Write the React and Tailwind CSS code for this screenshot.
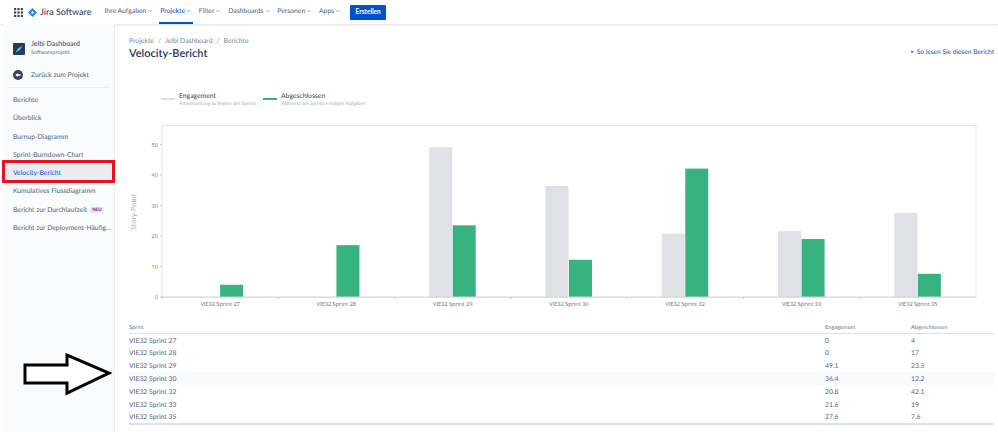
import { ChevronDown } from 'lucide-react'

const navItems = ['Ihre Aufgaben', 'Projekte', 'Filter', 'Dashboards', 'Personen', 'Apps']

const reports = [
  'Überblick',
  'Burnup-Diagramm',
  'Sprint-Burndown-Chart',
  'Velocity-Bericht',
  'Kumulatives Flussdiagramm',
  'Bericht zur Durchlaufzeit',
  'Bericht zur Deployment-Häufig...',
]

const sprints = [
  { name: 'VIE32 Sprint 27', engagement: 0, done: 4 },
  { name: 'VIE32 Sprint 28', engagement: 0, done: 17 },
  { name: 'VIE32 Sprint 29', engagement: 49.1, done: 23.5 },
  { name: 'VIE32 Sprint 30', engagement: 36.4, done: 12.2 },
  { name: 'VIE32 Sprint 32', engagement: 20.8, done: 42.1 },
  { name: 'VIE32 Sprint 33', engagement: 21.6, done: 19 },
  { name: 'VIE32 Sprint 35', engagement: 27.6, done: 7.6 },
]

const AppGrid = () => (
  <svg width="9" height="9" viewBox="0 0 9 9" fill="#344563">
    {[0, 3.4, 6.8].map((y) =>
      [0, 3.4, 6.8].map((x) => <rect key={`${x}-${y}`} x={x} y={y} width="2.2" height="2.2" />)
    )}
  </svg>
)

const JiraLogo = () => (
  <svg width="9" height="9" viewBox="0 0 10 10">
    <path d="M5 0 L10 5 L5 10 L0 5 Z" fill="#2684ff" />
    <path d="M5 3.4 L6.6 5 L5 6.6 L3.4 5 Z" fill="#fff" />
  </svg>
)

const ProjectIcon = () => (
  <svg width="12" height="12" viewBox="0 0 12 12" className="rounded-[1px]">
    <rect width="12" height="12" fill="#243b5a" />
    <path d="M3 9 L5 5.5 L9.5 2.5 L7 7 Z" fill="#4fc3d9" />
    <path d="M2.5 9.5 L4 8 L4.6 8.6 Z" fill="#f5cd47" />
  </svg>
)

const BackIcon = () => (
  <svg width="10" height="10" viewBox="0 0 10 10">
    <circle cx="5" cy="5" r="5" fill="#344563" />
    <path d="M2.4 5 L4.8 3 V4.2 H7.6 V5.8 H4.8 V7 Z" fill="#fff" />
  </svg>
)

const VelocityChart = () => {
  const left = 33
  const right = 847
  const bottom = 172
  const unit = 3.05
  const step = (right - left) / 7
  return (
    <svg width="860" height="188" viewBox="0 0 860 188" className="block">
      <rect x={left} y="0.5" width={right - left} height={bottom} fill="#fff" stroke="#e6e6e6" />
      <text
        transform="rotate(-90 7 87)"
        x="7"
        y="87"
        textAnchor="middle"
        fontSize="7"
        fill="#a3a3a3"
        fontFamily="Open Sans, sans-serif"
      >
        Story-Point
      </text>
      {[0, 10, 20, 30, 40, 50].map((v) => (
        <g key={v}>
          <line x1={left - 2} x2={left} y1={bottom - v * unit} y2={bottom - v * unit} stroke="#ccc" />
          <text
            x={left - 4}
            y={bottom - v * unit + 2}
            textAnchor="end"
            fontSize="5.6"
            fill="#777"
            fontFamily="Open Sans, sans-serif"
          >
            {v}
          </text>
        </g>
      ))}
      {sprints.map((s, i) => {
        const mid = left + step * i + step / 2
        return (
          <g key={s.name}>
            <line x1={left + step * i} x2={left + step * i} y1={bottom} y2={bottom + 2} stroke="#ccc" />
            {s.engagement > 0 && (
              <rect x={mid - 23.5} y={bottom - s.engagement * unit} width="23" height={s.engagement * unit} fill="#dfe1e6" />
            )}
            <rect x={mid} y={bottom - s.done * unit} width="23" height={s.done * unit} fill="#36b37e" />
            <text
              x={mid}
              y={bottom + 9}
              textAnchor="middle"
              fontSize="5.6"
              fill="#666"
              fontFamily="Open Sans, sans-serif"
            >
              {s.name}
            </text>
          </g>
        )
      })}
      <line x1={left} x2={right} y1={bottom} y2={bottom} stroke="#d5d5d5" />
    </svg>
  )
}

export default function App() {
  return (
    <div className="relative flex h-[432px] w-[998px] flex-col overflow-hidden bg-white font-['Lato',sans-serif] text-[#505f79] [text-rendering:geometricPrecision]">
      <header className="flex h-[24px] shrink-0 items-center pl-[14px] shadow-[0_1px_2px_rgba(9,30,66,0.15)]">
        <AppGrid />
        <div className="ml-[5px] flex items-center gap-[3px]">
          <JiraLogo />
          <span className="text-[9px] font-medium text-[#344563]">Jira Software</span>
        </div>
        <nav className="ml-[12px] flex h-full items-center gap-[4.8px]">
          {navItems.map((item) => (
            <div
              key={item}
              className={
                item === 'Projekte'
                  ? 'flex h-full items-center gap-[1px] border-b-2 border-[#0052cc] px-[1px] text-[6.8px] text-[#0052cc]'
                  : 'flex h-full items-center gap-[1px] border-b-2 border-transparent px-[1px] text-[6.8px] text-[#505f79]'
              }
            >
              {item}
              <ChevronDown size={6} />
            </div>
          ))}
        </nav>
        <button className="ml-[8px] h-[15px] w-[36px] rounded-[1px] bg-[#0052cc] text-[6.5px] font-bold text-white">
          Erstellen
        </button>
      </header>

      <div className="flex min-h-0 flex-1 pl-[4px]">
        <aside className="w-[111px] shrink-0 border-r border-[#ebecf0] bg-[#fafbfc] pt-[16px] text-[6.8px]">
          <div className="flex items-center gap-[6px] pl-[9px]">
            <ProjectIcon />
            <div>
              <div className="text-[7px] leading-[9px] text-[#344563]">Jelbi Dashboard</div>
              <div className="text-[5.5px] leading-[8px] text-[#6b778c]">Softwareprojekt</div>
            </div>
          </div>
          <div className="mt-[13px] flex items-center gap-[8px] pl-[9px]">
            <BackIcon />
            <span>Zurück zum Projekt</span>
          </div>
          <div className="mx-[4px] mt-[7px] border-t border-[#ebecf0]" />
          <div className="mt-[3px] flex h-[18px] items-center pl-[9px]">Berichte</div>
          {reports.map((r) => (
            <div
              key={r}
              className={
                r === 'Velocity-Bericht'
                  ? 'flex h-[18.3px] items-center bg-[#ebecf0] pl-[9px] text-[#0052cc]'
                  : 'flex h-[18.3px] items-center pl-[9px]'
              }
            >
              {r}
              {r === 'Bericht zur Durchlaufzeit' && (
                <span className="ml-[3px] rounded-[1px] bg-[#eae6ff] px-[2px] text-[4.5px] font-bold leading-[6px] text-[#403294]">
                  NEU
                </span>
              )}
            </div>
          ))}
        </aside>

        <main className="min-w-0 flex-1 pl-[14px] pr-[4px] pt-[13px]">
          <div className="flex items-start justify-between">
            <div>
              <div className="flex gap-[4px] text-[6.8px] leading-[9px] text-[#7a869a]">
                <span>Projekte</span>
                <span>/</span>
                <span>Jelbi Dashboard</span>
                <span>/</span>
                <span>Berichte</span>
              </div>
              <h1 className="text-[11px] font-semibold leading-[16px] text-[#253858]">Velocity-Bericht</h1>
            </div>
            <div className="mt-[11px] flex items-center gap-[3px] text-[6.6px] text-[#0052cc]">
              <span className="text-[5px]">▸</span>
              So lesen Sie diesen Bericht
            </div>
          </div>

          <div className="mt-[30px] flex gap-[4px] pl-[32px]">
            <div className="flex w-[98px] gap-[4px]">
              <div className="mt-[6px] h-[2px] w-[14px] shrink-0 bg-[#dfe1e6]" />
              <div>
                <div className="text-[6.8px] leading-[9px] text-[#344563]">Engagement</div>
                <div className="whitespace-nowrap text-[4.8px] leading-[7px] text-[#a5adba]">
                  Arbeitsumfang zu Beginn des Sprints
                </div>
              </div>
            </div>
            <div className="flex gap-[4px]">
              <div className="mt-[6px] h-[2px] w-[14px] shrink-0 bg-[#36b37e]" />
              <div>
                <div className="text-[6.8px] leading-[9px] text-[#344563]">Abgeschlossen</div>
                <div className="whitespace-nowrap text-[4.8px] leading-[7px] text-[#a5adba]">
                  Während des Sprints erledigte Aufgaben
                </div>
              </div>
            </div>
          </div>

          <div className="mt-[17px]">
            <VelocityChart />
          </div>

          <table className="mt-[9px] w-[865px] table-fixed text-left text-[6.8px] text-[#5a6478]">
            <thead>
              <tr className="h-[11px] border-b border-[#dfe1e6] text-[5.6px] text-[#6b778c]">
                <th className="w-[696px] pt-[1px] font-normal">Sprint</th>
                <th className="w-[86px] pt-[1px] font-normal">Engagement</th>
                <th className="pt-[1px] font-normal">Abgeschlossen</th>
              </tr>
            </thead>
            <tbody className="border-b-2 border-[#dfe1e6]">
              {sprints.map((s) => (
                <tr key={s.name} className={s.name === 'VIE32 Sprint 30' ? 'h-[12.9px] bg-[#f9fafc]' : 'h-[12.9px]'}>
                  <td className="pt-[2px]">{s.name}</td>
                  <td className="pt-[2px]">{s.engagement}</td>
                  <td className="pt-[2px]">{s.done}</td>
                </tr>
              ))}
            </tbody>
          </table>
        </main>
      </div>

      <div className="absolute left-[2px] top-[160px] h-[23px] w-[113px] border-[3px] border-[#e8101f]" />

      <svg className="absolute left-[23px] top-[352px]" width="90" height="44" viewBox="0 0 90 44">
        <path d="M2 13 H44 V3 L86 21 L44 41 V31 H2 Z" fill="#fff" stroke="#000" strokeWidth="3" />
      </svg>
    </div>
  )
}
